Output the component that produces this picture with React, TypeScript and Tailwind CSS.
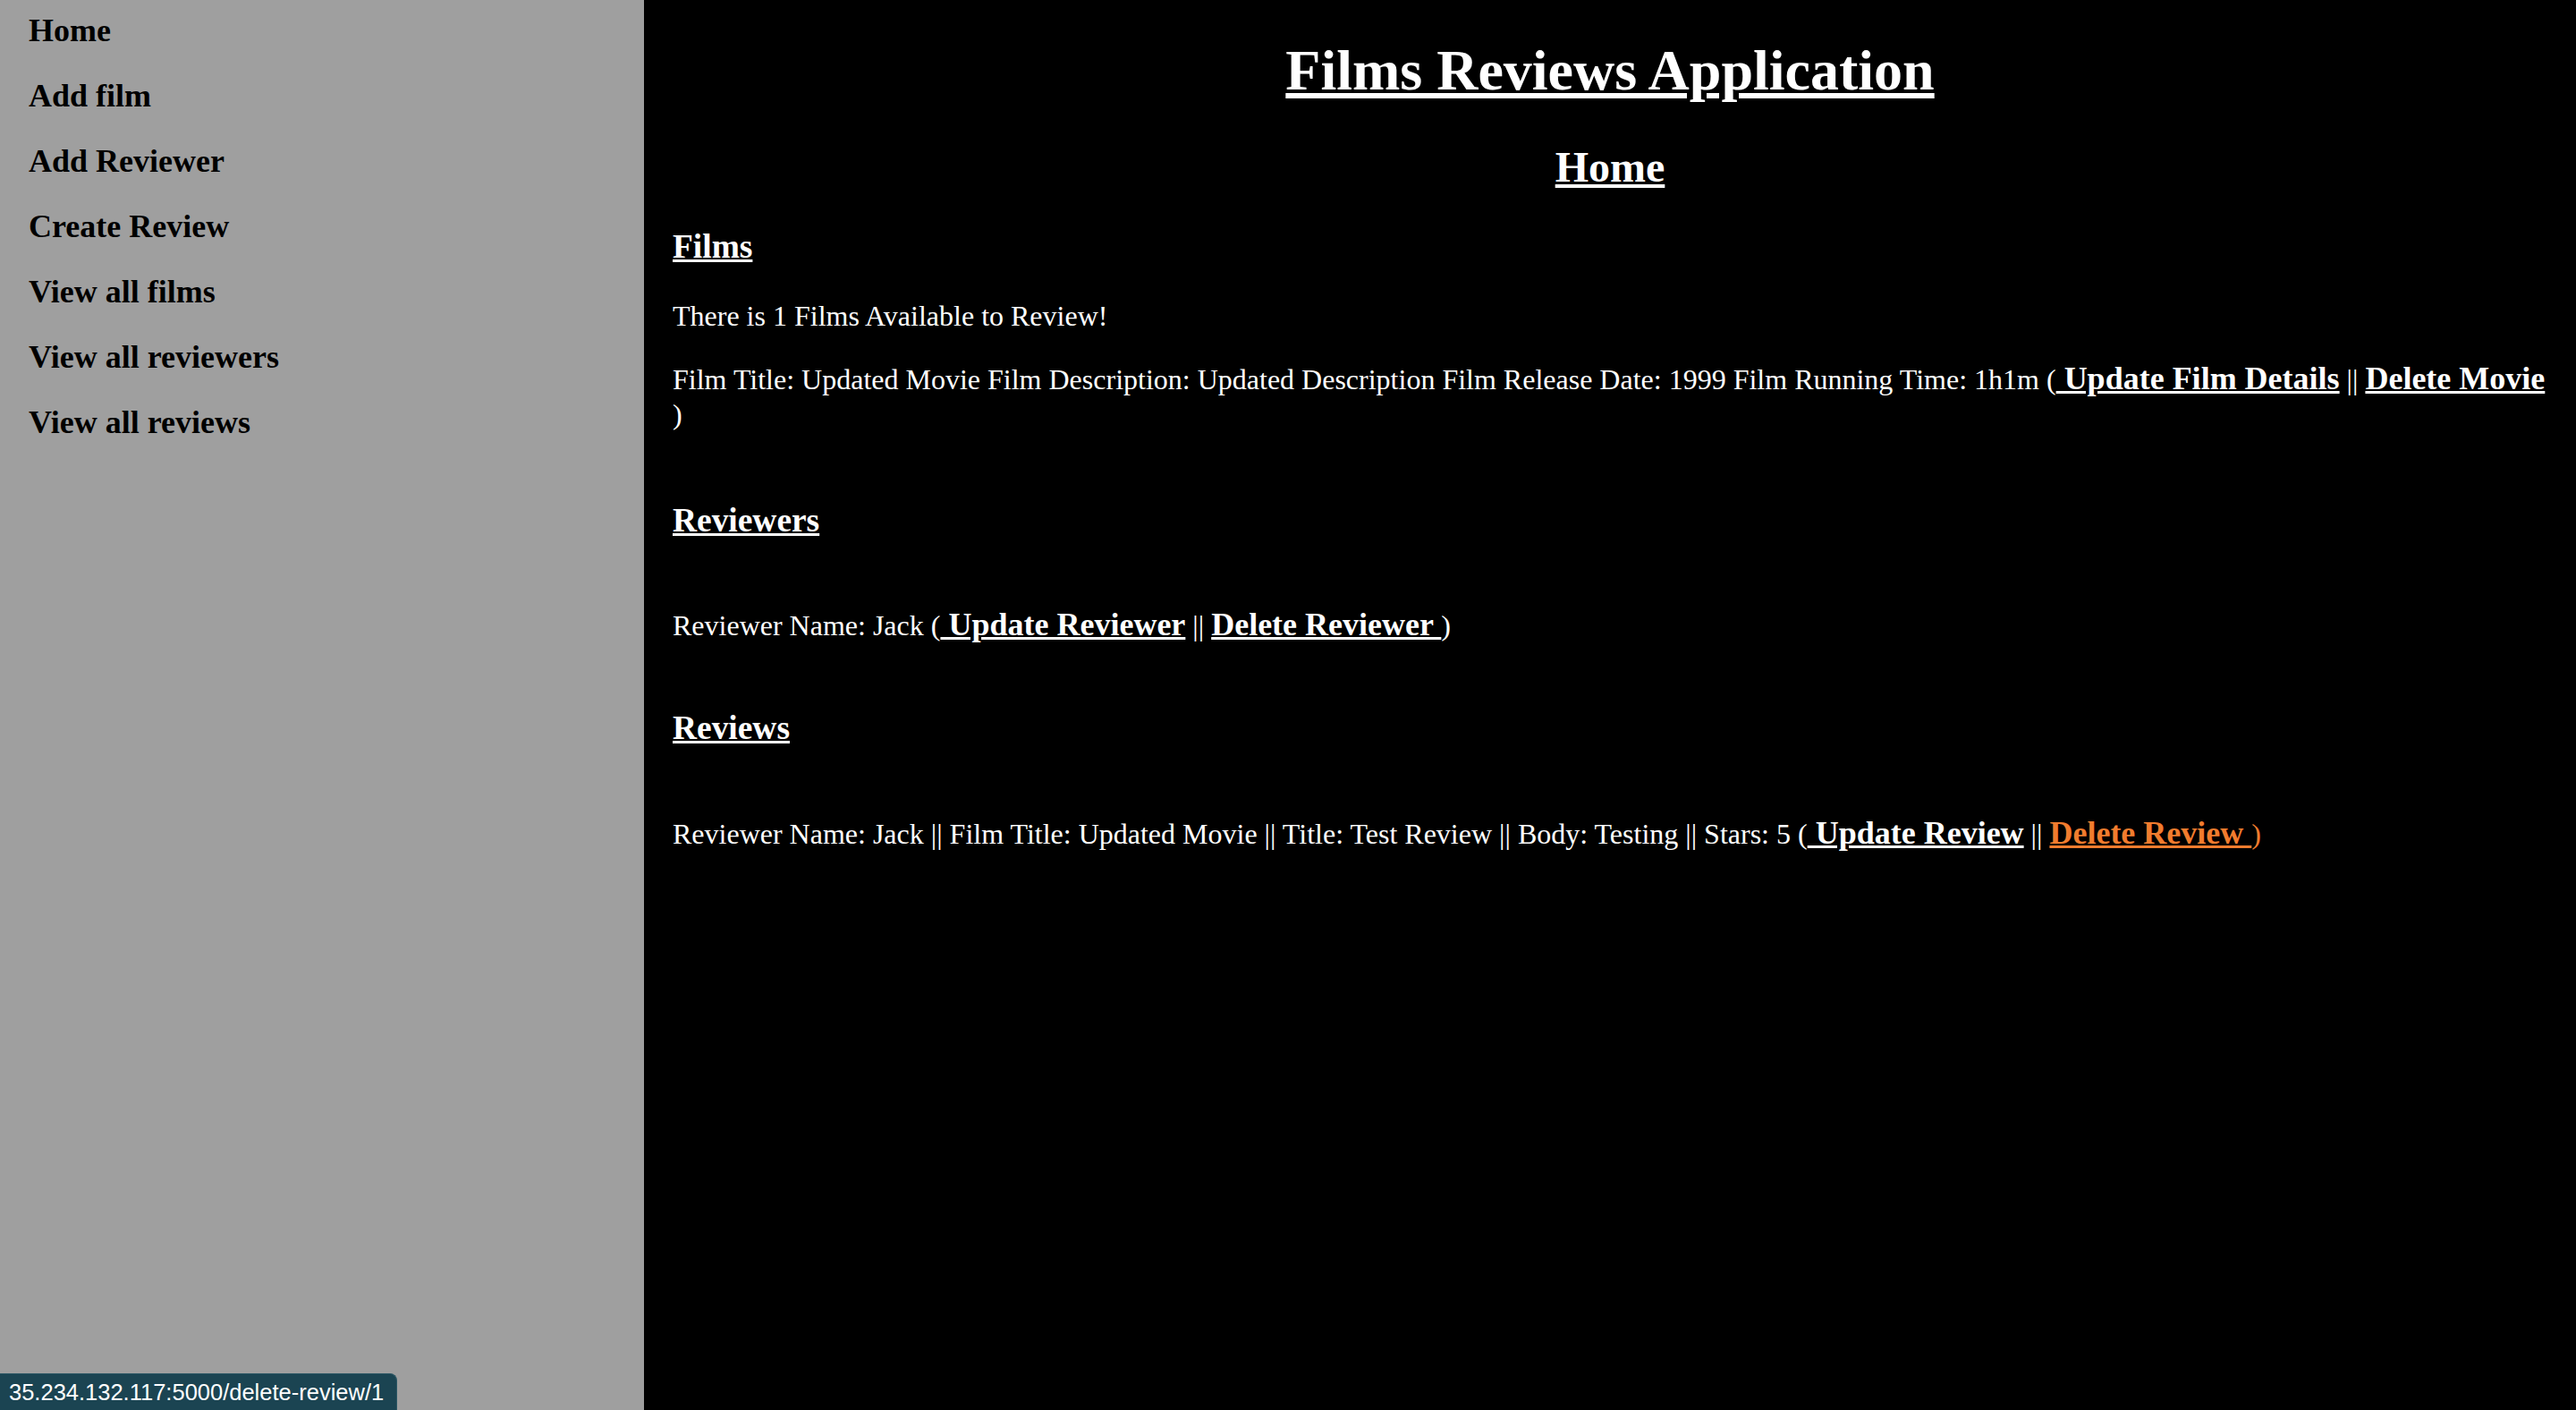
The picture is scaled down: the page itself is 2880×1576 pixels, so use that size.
/**
 * Films Reviews Application — home page with grey sidebar nav and black content panel.
 */
const serif = "font-['Liberation_Serif','Times_New_Roman',serif]";

const navItems = [
  'Home',
  'Add film',
  'Add Reviewer',
  'Create Review',
  'View all films',
  'View all reviewers',
  'View all reviews',
];

function Action({ children, hot = false }: { children: React.ReactNode; hot?: boolean }) {
  return (
    <a
      href="#"
      className={`text-[36px] leading-[37px] font-bold underline ${hot ? 'text-[#f17c2e]' : 'text-white'}`}
    >
      {children}
    </a>
  );
}

export default function App() {
  return (
    <div className={`relative flex h-[1576px] w-full overflow-hidden ${serif}`}>
      {/* Sidebar */}
      <nav className="w-[720px] shrink-0 bg-[#9f9f9f]">
        {navItems.map((item) => (
          <a
            key={item}
            href="#"
            className="block px-8 pt-[14px] pb-[18px] text-[36px] leading-[41px] font-bold text-black"
          >
            {item}
          </a>
        ))}
      </nav>

      {/* Main */}
      <main className="flex-1 bg-black px-8 text-white">
        <h1 className="mt-[42px] text-center text-[64px] leading-[74px] font-bold underline">
          Films Reviews Application
        </h1>
        <h2 className="mt-[43px] text-center text-[48px] leading-[55px] font-bold underline">Home</h2>

        <h3 className="mt-[40px] text-[37.44px] leading-[43px] font-bold underline">Films</h3>
        <p className="mt-[38px] text-[32px] leading-[37px]">There is 1 Films Available to Review!</p>
        <p className="mt-[33px] text-[32px] leading-[39px]">
          Film Title: Updated Movie Film Description: Updated Description Film Release Date: 1999 Film
          Running Time: 1h1m (<Action> Update Film Details</Action> || <Action>Delete Movie </Action>)
        </p>

        <h3 className="mt-[77px] text-[37.44px] leading-[43px] font-bold underline">Reviewers</h3>
        <p className="mt-[77px] text-[32px] leading-[37px]">
          Reviewer Name: Jack (<Action> Update Reviewer</Action> || <Action>Delete Reviewer </Action>)
        </p>

        <h3 className="mt-[74px] text-[37.44px] leading-[43px] font-bold underline">Reviews</h3>
        <p className="mt-[78px] text-[32px] leading-[37px]">
          Reviewer Name: Jack || Film Title: Updated Movie || Title: Test Review || Body: Testing || Stars: 5 (
          <Action> Update Review</Action> || <Action hot>Delete Review </Action>
          <span className="text-[#f17c2e]">)</span>
        </p>
      </main>

      {/* Browser status bar (hovered link) */}
      <div className="absolute bottom-0 left-0 flex h-[41px] items-center rounded-tr-[8px] border-t border-r border-[#2a5664] bg-[#1b4452] pl-[10px] pr-[14px] font-['Liberation_Sans',Arial,sans-serif] text-[25.5px] text-white">
        35.234.132.117:5000/delete-review/1
      </div>
    </div>
  );
}
